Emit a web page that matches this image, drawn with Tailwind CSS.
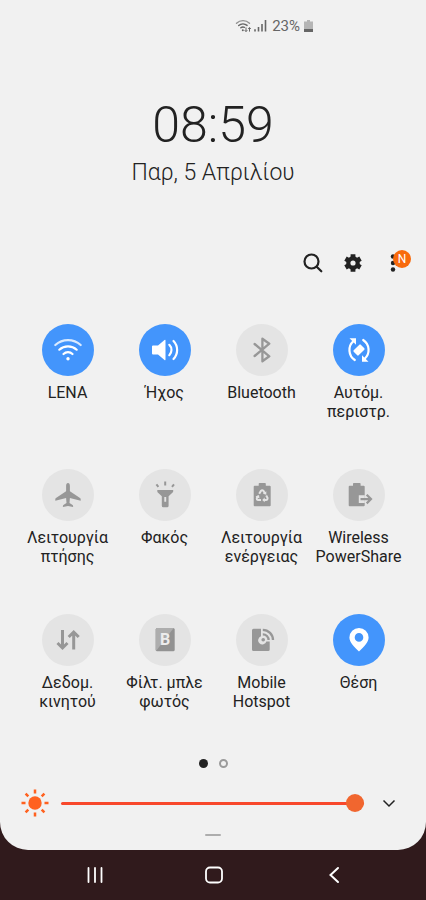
<!DOCTYPE html>
<html lang="el">
<head>
<meta charset="utf-8">
<meta name="viewport" content="width=device-width, initial-scale=1">
<title>Γρήγορες ρυθμίσεις</title>
<script src="https://cdn.jsdelivr.net/npm/@tailwindcss/browser@4"></script>
</head>
<body class="flex min-h-screen flex-col bg-[#301a1c] font-[Roboto,'Noto_Sans',sans-serif] text-[#222]">
<main class="flex grow flex-col rounded-b-[28px] bg-[#f1f1f1]">

  <header>
    <div class="flex h-[52px] items-center justify-end gap-1 pr-[113px] text-[15px] text-[#666]">
      <svg class="h-4 w-[34px]" viewBox="0 0 34 16" fill="none" aria-label="Wi-Fi και σήμα">
        <g stroke="#666" stroke-width="1.4" stroke-linecap="round">
          <path d="M2.500 5.200A9.500 9.500 0 0 1 15.500 5.200" opacity=".7"/><path d="M4.700 7.600A6.400 6.400 0 0 1 13.100 7.400"/><path d="M6.800 9.800A3.400 3.400 0 0 1 10.500 9.300"/>
        </g>
        <circle cx="8.800" cy="12.200" r="1" fill="#666"/>
        <path d="M12 9.500v4M10.700 12.200l1.300 1.400 1.300-1.400M15.500 13.600v-4M14.200 11l1.300-1.400 1.300 1.400" stroke="#666"/>
        <path d="M21 11.300v2.200M24.500 9v4.500M28 6v7.500M31.500 2v11.500" stroke="#666" stroke-width="1.600"/>
      </svg>
      <span>23%</span>
      <svg class="h-[14px] w-[9px]" viewBox="0 0 9 14" aria-label="Μπαταρία"><path d="M3 1h3v1.500h3V10H0V2.500h3z" fill="#b5b5b5"/><path d="M0 10h9v3H0z" fill="#666"/></svg>
    </div>
    <h1 class="mt-[47px] text-center text-[50px] leading-[52px] font-light">08:59</h1>
    <p class="mt-1.5 text-center text-[23px] leading-8 font-light">Παρ, 5 Απριλίου</p>
  </header>

  <div class="mt-[54px] flex justify-end pr-[13px]">
    <button class="grid h-10 w-10 place-items-center" aria-label="Αναζήτηση">
      <svg class="size-6" viewBox="0 0 24 24" fill="none" stroke="#222" stroke-width="2.200" stroke-linecap="round"><circle cx="10.500" cy="10.500" r="7"/><path d="M15.700 15.700l4.600 4.600"/></svg>
    </button>
    <button class="grid h-10 w-10 place-items-center" aria-label="Ρυθμίσεις">
      <svg class="size-6" viewBox="0 0 24 24" fill="none"><circle cx="12" cy="12" r="4.700" stroke="#222" stroke-width="4.200"/><path d="M12 3.300v3M12 17.700v3M4.500 7.650l2.600 1.500M16.900 14.850l2.600 1.500M4.500 16.350l2.600-1.500M16.900 9.150l2.600-1.500" stroke="#222" stroke-width="4.800"/></svg>
    </button>
    <button class="relative grid h-10 w-10 place-items-center" aria-label="Περισσότερες επιλογές">
      <svg class="size-6" viewBox="0 0 24 24" fill="#222"><circle cx="12" cy="5.500" r="2.200"/><circle cx="12" cy="12" r="2.200"/><circle cx="12" cy="18.500" r="2.200"/></svg>
      <span class="absolute top-[7px] left-5 grid size-[18px] place-items-center rounded-full bg-[#f86a0c] text-xs text-white">N</span>
    </button>
  </div>

  <section class="mt-[41px] grid grid-cols-4 gap-y-12 px-[19px] text-center text-base leading-[19px]" aria-label="Διακόπτες">
    <button class="flex flex-col items-center gap-[7px]" aria-pressed="true">
      <svg class="size-[52px] rounded-full bg-[#4395fc]" viewBox="0 0 52 52" fill="none" stroke="#fff" stroke-width="2.200" stroke-linecap="round" aria-hidden="true">
        <path d="M13.300 21A19 19 0 0 1 38.700 21" opacity=".8"/><path d="M17.300 25.700A12.800 12.800 0 0 1 34.700 25.700"/><path d="M21.500 30A6.500 6.500 0 0 1 30.500 30"/><circle cx="26" cy="34.700" r="1.700" fill="#fff" stroke="none"/>
      </svg>
      <span>LENA</span>
    </button>
    <button class="flex flex-col items-center gap-[7px]" aria-pressed="true">
      <svg class="size-[52px] rounded-full bg-[#4395fc]" viewBox="0 0 52 52" fill="none" stroke="#fff" stroke-width="2.200" stroke-linecap="round" aria-hidden="true">
        <path d="M14 21.500h5l6.500-5.500q1-.6 1 .5v19q0 1.100-1 .5L19 30.500h-5q-1 0-1-1v-7q0-1 1-1z" fill="#fff" stroke="none"/><path d="M30.300 20.800A7.300 7.300 0 0 1 30.300 31.200M34.500 17A13 13 0 0 1 34.500 35"/>
      </svg>
      <span>Ήχος</span>
    </button>
    <button class="flex flex-col items-center gap-[7px]" aria-pressed="false">
      <svg class="size-[52px] rounded-full bg-[#e4e4e4]" viewBox="0 0 52 52" fill="none" stroke="#979797" stroke-width="2.300" stroke-linecap="round" stroke-linejoin="round" aria-hidden="true">
        <path d="M18.600 20L33.300 32.300L26.400 37.300V14.700L33.300 19.700L18.600 32"/>
      </svg>
      <span>Bluetooth</span>
    </button>
    <button class="flex flex-col items-center gap-[7px]" aria-pressed="true">
      <svg class="size-[52px] rounded-full bg-[#4395fc]" viewBox="0 0 52 52" fill="none" stroke="#fff" stroke-width="2.200" stroke-linecap="round" aria-hidden="true">
        <path d="M21.800 36A12 12 0 0 1 20.500 17"/><path d="M16.500 14.300H23V20.700z" fill="#fff" stroke="none"/>
        <path d="M30.200 16A12 12 0 0 1 31.500 35"/><path d="M35.500 37.700H29V31.300z" fill="#fff" stroke="none"/>
        <rect x="22.500" y="21" width="7" height="10" rx="1" transform="rotate(45 26 26)" fill="#fff" stroke="none"/>
      </svg>
      <span>Αυτόμ.<br>περιστρ.</span>
    </button>

    <button class="flex flex-col items-center gap-[7px]" aria-pressed="false">
      <svg class="size-[52px] rounded-full bg-[#e4e4e4]" viewBox="0 0 52 52" fill="#979797" aria-hidden="true">
        <path d="M26 14c1.200 0 1.900 1.300 1.900 3v5.300l10.100 6.800q.7.500.7 1.200v1.400L27.900 28.900l-.4 5 3.100 2q.5.400.5 1v1L26 36.900 20.900 37.900v-1q0-.6.5-1l3.100-2-.4-5L13.300 31.700v-1.400q0-.7.7-1.200l10.100-6.800V17c0-1.700.7-3 1.900-3z"/>
      </svg>
      <span>Λειτουργία<br>πτήσης</span>
    </button>
    <button class="flex flex-col items-center gap-[7px]" aria-pressed="false">
      <svg class="size-[52px] rounded-full bg-[#e4e4e4]" viewBox="0 0 52 52" fill="#979797" aria-hidden="true">
        <path d="M18.300 21h15.900v1.300q0 .7-.6 1.200l-4 3.700v9.600q0 1.500-1.500 1.500h-3.800q-1.500 0-1.500-1.500v-9.600l-4-3.700q-.5-.5-.5-1.200z"/><path d="M25.300 28h1.900v4.700h-1.900z" fill="#e4e4e4"/><path d="M26.200 12.500v4M17.400 15.300l2 2.500M35 15.300l-2 2.500" stroke="#979797" stroke-width="2"/>
      </svg>
      <span>Φακός</span>
    </button>
    <button class="flex flex-col items-center gap-[7px]" aria-pressed="false">
      <svg class="size-[52px] rounded-full bg-[#e4e4e4]" viewBox="0 0 52 52" fill="none" aria-hidden="true">
        <path d="M22.700 14.800q0-.8.800-.8h5.500q.8 0 .8.800v1.900h3.900q1 0 1 1v18.600q0 1-1 1H18.700q-1 0-1-1V17.700q0-1 1-1h4z" fill="#979797"/>
        <g stroke="#e4e4e4" stroke-width="2"><path d="M23.200 24.800l1.700-2.900q1.300-1.500 2.600 0l1.200 2"/><path d="M30.200 26.400l1.300 2.400q.4 2-1.700 2.200h-1.800"/><path d="M25 31h-2.600q-2.100-.2-1.500-2.200l1-1.800"/></g>
        <path d="M30.300 22.200v3.500l-3.400-1zM28.700 28.600v4.600l-2.500-2.300zM19.500 27.400l3.500-1.300.5 3.500z" fill="#e4e4e4"/>
      </svg>
      <span>Λειτουργία<br>ενέργειας</span>
    </button>
    <button class="flex flex-col items-center gap-[7px]" aria-pressed="false">
      <svg class="size-[52px] rounded-full bg-[#e4e4e4]" viewBox="0 0 52 52" fill="none" aria-hidden="true">
        <path d="M20 14.800q0-.8.800-.8h6q.8 0 .8.800v1.900h3.100q1 0 1 1v18.600q0 1-1 1h-14q-1 0-1-1V17.700q0-1 1-1H20z" fill="#979797"/>
        <path d="M25.800 26.300h6v7.600h-6z" fill="#e4e4e4"/><path d="M27.500 30.100H38M33.700 25.800l4.300 4.300-4.300 4.300" stroke="#979797" stroke-width="2.200"/>
      </svg>
      <span>Wireless<br>PowerShare</span>
    </button>

    <button class="flex flex-col items-center gap-[7px]" aria-pressed="false">
      <svg class="size-[52px] rounded-full bg-[#e4e4e4]" viewBox="0 0 52 52" fill="none" stroke="#979797" stroke-width="3" aria-hidden="true">
        <path d="M20.500 16V34M15.500 29l5 5 5-5M31.700 35.500V18M26.700 23l5-5 5 5"/>
      </svg>
      <span>Δεδομ.<br>κινητού</span>
    </button>
    <button class="flex flex-col items-center gap-[7px]" aria-pressed="false">
      <svg class="size-[52px] rounded-full bg-[#e4e4e4]" viewBox="0 0 52 52" aria-hidden="true">
        <rect x="16.700" y="14" width="19" height="23.300" rx="1.500" fill="#929292"/><path d="M18.200 14H34.700L17.200 36.800q-.5-.4-.5-1V15.500q0-1.500 1.500-1.500z" fill="#adadad"/>
        <text x="26.200" y="31.300" text-anchor="middle" font-size="16" font-weight="700" fill="#ececec">B</text>
      </svg>
      <span>Φίλτ. μπλε<br>φωτός</span>
    </button>
    <button class="flex flex-col items-center gap-[7px]" aria-pressed="false">
      <svg class="size-[52px] rounded-full bg-[#e4e4e4]" viewBox="0 0 52 52" fill="none" aria-hidden="true">
        <path d="M17.500 14.700h7.500v7.600a4.200 4.200 0 1 0 5.400 5.100h3.300v8.100q0 1.500-1.500 1.500H17.500q-1.500 0-1.500-1.500V16.200q0-1.500 1.500-1.500z" fill="#979797"/>
        <circle cx="27.200" cy="25.700" r="1.800" fill="#979797"/><path d="M26.800 20.300a5.700 5.700 0 0 1 5.800 5.800M26.800 15.800a10.200 10.200 0 0 1 10.200 10.300" stroke="#979797" stroke-width="2.300"/>
      </svg>
      <span>Mobile<br>Hotspot</span>
    </button>
    <button class="flex flex-col items-center gap-[7px]" aria-pressed="true">
      <svg class="size-[52px] rounded-full bg-[#4395fc]" viewBox="0 0 52 52" fill="#fff" aria-hidden="true">
        <path fill-rule="evenodd" d="M26 14a9.600 9.600 0 0 1 9.600 9.600c0 5-4.600 9-9.600 14-5-5-9.600-9-9.600-14A9.600 9.600 0 0 1 26 14zm0 5.100a4.300 4.300 0 1 0 0 8.600 4.300 4.300 0 0 0 0-8.600z"/>
      </svg>
      <span>Θέση</span>
    </button>
  </section>

  <div class="mt-12 flex justify-center gap-[11px]" aria-label="Σελίδα 1 από 2">
    <span class="size-[9px] rounded-full bg-[#222]"></span>
    <span class="size-[9px] rounded-full border-2 border-[#9b9b9b]"></span>
  </div>

  <div class="mt-5 flex h-[30px] items-center pr-[25px] pl-5">
    <svg class="size-[30px] shrink-0" viewBox="0 0 30 30" aria-hidden="true"><circle cx="15" cy="15" r="6.700" fill="#ff611f"/><path d="M15 1.500v4M15 24.500v4M1.500 15h4M24.500 15h4M5.600 5.600l2.700 2.700M21.700 21.700l2.700 2.700M5.600 24.400l2.700-2.700M21.700 8.300l2.700-2.700" stroke="#ff611f" stroke-width="2.500"/></svg>
    <input type="range" min="0" max="100" value="100" aria-label="Φωτεινότητα" class="ml-[11px] h-[18px] min-w-0 grow appearance-none bg-transparent [&::-webkit-slider-runnable-track]:h-[3px] [&::-webkit-slider-runnable-track]:rounded-full [&::-webkit-slider-runnable-track]:bg-[#f8482c] [&::-webkit-slider-thumb]:-mt-2 [&::-webkit-slider-thumb]:size-[18px] [&::-webkit-slider-thumb]:appearance-none [&::-webkit-slider-thumb]:rounded-full [&::-webkit-slider-thumb]:bg-[#f1662f]">
    <button class="ml-[13px] grid size-6 shrink-0 place-items-center" aria-label="Ανάπτυξη">
      <svg class="size-6" viewBox="0 0 24 24" fill="none" stroke="#222" stroke-width="1.500"><path d="M6.500 9.500l5.500 5.500 5.500-5.500"/></svg>
    </button>
  </div>
  <div class="mx-auto mt-4 mb-3.5 h-0.5 w-4 rounded-full bg-[#adadad]"></div>
</main>

<nav class="flex h-[50px] shrink-0 items-center justify-center gap-24 pl-0.5" aria-label="Πλοήγηση">
  <button class="grid size-6 place-items-center" aria-label="Πρόσφατα"><svg class="size-6" viewBox="0 0 24 24" stroke="#fff" stroke-width="1.800" stroke-linecap="round"><path d="M6.500 5v14M13 5v14M19.500 5v14"/></svg></button>
  <button class="grid size-6 place-items-center" aria-label="Αρχική"><svg class="size-6" viewBox="0 0 24 24" fill="none" stroke="#fff" stroke-width="1.800"><rect x="4" y="4.500" width="16" height="15" rx="4"/></svg></button>
  <button class="grid size-6 place-items-center" aria-label="Πίσω"><svg class="size-6" viewBox="0 0 24 24" fill="none" stroke="#fff" stroke-width="2" stroke-linecap="round"><path d="M16 5l-7.500 7 7.500 7"/></svg></button>
</nav>
</body>
</html>
